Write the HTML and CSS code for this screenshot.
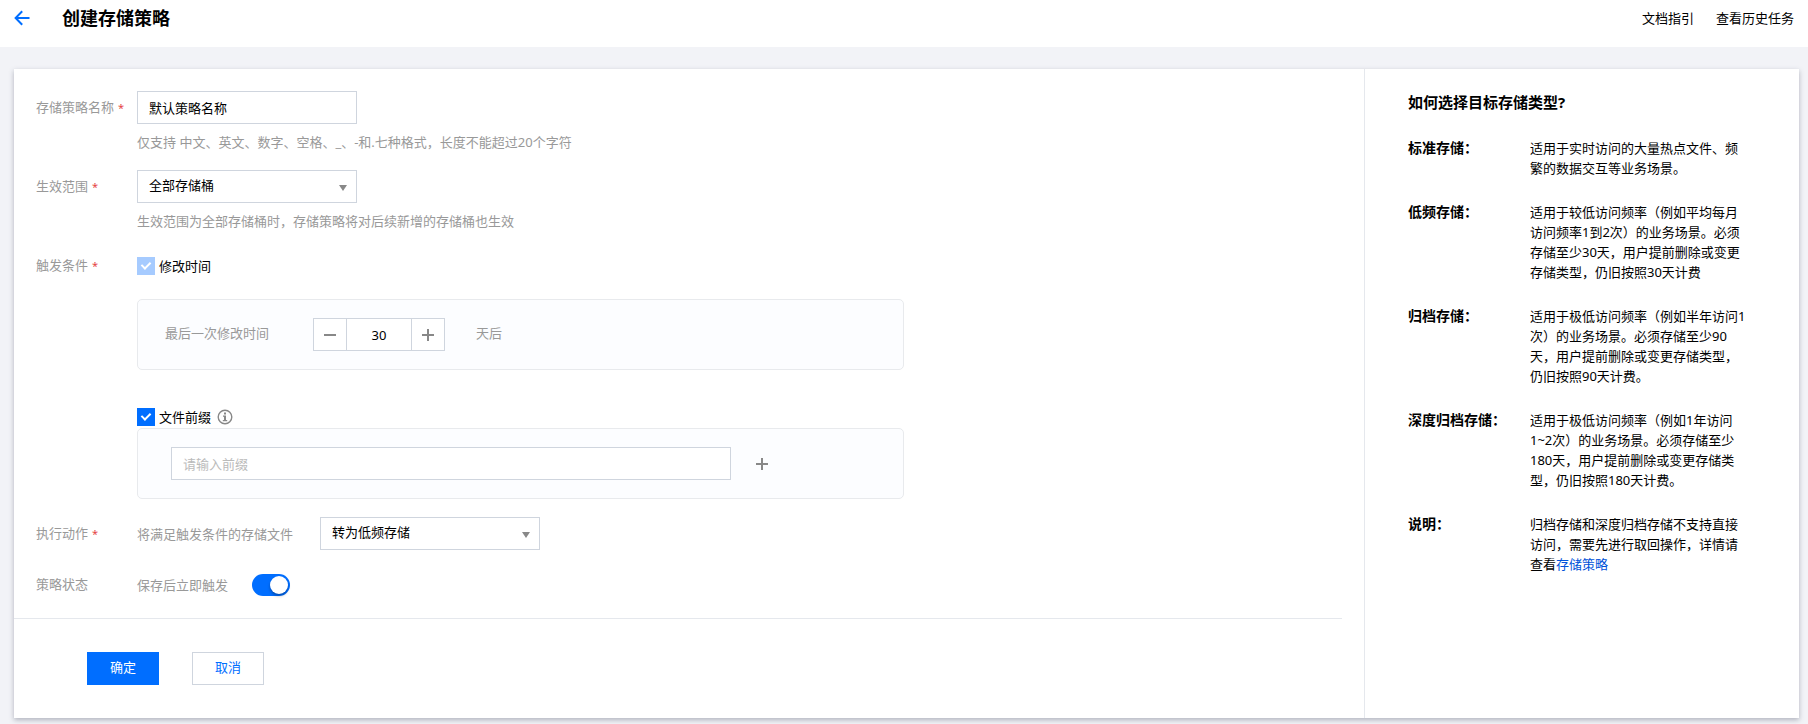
FILE: index.html
```html
<!DOCTYPE html>
<html lang="zh-CN">
<head>
  <meta charset="UTF-8" />
  <meta name="viewport" content="width=device-width, initial-scale=1.0"/>
  <title>创建存储策略</title>
  <link rel="stylesheet" href="styles.css">
</head>
<body>

<!-- 顶部标题栏 -->
<header class="topbar">
  <a href="#" class="back" aria-label="返回">
    <svg width="16" height="16" viewBox="0 0 16 16" fill="none" stroke="currentColor" stroke-width="2">
      <path d="M15.5 8H2M8.2 1.2L1.6 8l6.6 6.8"/>
    </svg>
  </a>
  <h1>创建存储策略</h1>
  <nav class="top-links">
    <a href="#">文档指引</a>
    <a href="#">查看历史任务</a>
  </nav>
</header>

<main class="card">
  <!-- 策略表单 -->
  <form class="policy-form">
    <div class="rows">
      <div class="row">
        <label class="row-label" for="name">存储策略名称<span class="required">*</span></label>
        <div class="field">
          <input type="text" class="text-input" id="name" value="默认策略名称">
          <p class="hint">仅支持 中文、英文、数字、空格、_、-和.七种格式，长度不能超过20个字符</p>
        </div>
      </div>

      <div class="row">
        <label class="row-label" for="scope">生效范围<span class="required">*</span></label>
        <div class="field">
          <div class="select-wrap">
            <select id="scope">
              <option>全部存储桶</option>
            </select>
          </div>
          <p class="hint">生效范围为全部存储桶时，存储策略将对后续新增的存储桶也生效</p>
        </div>
      </div>

      <div class="row">
        <span class="row-label">触发条件<span class="required">*</span></span>
        <div class="field conditions">
          <div class="condition condition-time">
            <label class="check"><input type="checkbox" checked disabled>修改时间</label>
            <div class="panel">
              <label for="days">最后一次修改时间</label>
              <div class="stepper">
                <button type="button" aria-label="减少">
                  <svg width="12" height="12" viewBox="0 0 12 12"><path d="M0 5h12v2H0z"/></svg>
                </button>
                <input type="text" id="days" value="30">
                <button type="button" aria-label="增加">
                  <svg width="12" height="12" viewBox="0 0 12 12"><path d="M0 5h5V0h2v5h5v2H7v5H5V7H0z"/></svg>
                </button>
              </div>
              <span>天后</span>
            </div>
          </div>

          <div class="condition">
            <div class="check-line">
              <label class="check"><input type="checkbox" checked>文件前缀</label>
              <svg class="info" width="16" height="16" viewBox="0 0 16 16">
                <circle cx="8" cy="8" r="6.8" fill="none" stroke="#888" stroke-width="1.4"/>
                <path d="M7 3.5h2v2H7zM6 6.5h3v4.6h1.2v1.2H5.8v-1.2H7V7.7H6z" fill="#888"/>
              </svg>
            </div>
            <div class="panel panel-prefix">
              <input type="text" class="text-input prefix-input" placeholder="请输入前缀" aria-label="文件前缀">
              <button type="button" class="add" aria-label="添加前缀">
                <svg width="12" height="12" viewBox="0 0 12 12"><path d="M0 5h5V0h2v5h5v2H7v5H5V7H0z"/></svg>
              </button>
            </div>
          </div>
        </div>
      </div>

      <div class="row">
        <span class="row-label">执行动作<span class="required">*</span></span>
        <div class="field inline">
          <label for="action">将满足触发条件的存储文件</label>
          <div class="select-wrap">
            <select id="action">
              <option>转为低频存储</option>
            </select>
          </div>
        </div>
      </div>

      <div class="row">
        <span class="row-label">策略状态</span>
        <div class="field inline">
          <label for="status">保存后立即触发</label>
          <input type="checkbox" class="switch" id="status" checked>
        </div>
      </div>
    </div>

    <div class="actions">
      <button type="submit" class="btn btn-primary">确定</button>
      <button type="button" class="btn">取消</button>
    </div>
  </form>

  <!-- 右侧说明 -->
  <aside class="guide">
    <h2>如何选择目标存储类型?</h2>
    <dl>
      <dt>标准存储：</dt>
      <dd>适用于实时访问的大量热点文件、频繁的数据交互等业务场景。</dd>
      <dt>低频存储：</dt>
      <dd>适用于较低访问频率（例如平均每月访问频率1到2次）的业务场景。必须存储至少30天，用户提前删除或变更存储类型，仍旧按照30天计费</dd>
      <dt>归档存储：</dt>
      <dd>适用于极低访问频率（例如半年访问1次）的业务场景。必须存储至少90天，用户提前删除或变更存储类型，仍旧按照90天计费。</dd>
      <dt>深度归档存储：</dt>
      <dd>适用于极低访问频率（例如1年访问1~2次）的业务场景。必须存储至少180天，用户提前删除或变更存储类型，仍旧按照180天计费。</dd>
      <dt>说明：</dt>
      <dd>归档存储和深度归档存储不支持直接访问，需要先进行取回操作，详情请查看<a href="#">存储策略</a></dd>
    </dl>
  </aside>
</main>

</body>
</html>
```

FILE: styles.css
```css
:root {
  --primary: #006eff;
  --border: #cfd5de;
  --line: #e5e8ed;
  --muted: #999;
  --icon: #888;
}

* {
  margin: 0;
  padding: 0;
  box-sizing: border-box;
}

body {
  min-height: 100vh;
  font-family: "Noto Sans", "Noto Sans CJK SC", sans-serif;
  font-size: 13px;
  line-height: 20px;
  color: #000;
  background-color: #f2f3f7;
}

input,
select,
button {
  font: inherit;
  color: inherit;
}

a {
  color: inherit;
  text-decoration: none;
}

/* 顶部标题栏 */
.topbar {
  display: flex;
  align-items: center;
  padding: 0 14px 11px;
  background-color: #fff;
}

.back {
  display: flex;
  margin-right: 32px;
  color: var(--primary);
}

.topbar h1 {
  font-size: 18px;
  line-height: 36px;
}

.top-links {
  display: flex;
  gap: 22px;
  margin-left: auto;
}

/* 主卡片 */
.card {
  display: flex;
  margin: 22px 9px 5px 14px;
  background-color: #fff;
  box-shadow: 0 2px 5px rgba(54, 58, 80, 0.35);
}

.policy-form {
  flex: 1;
  min-width: 0;
}

.rows {
  display: flex;
  flex-direction: column;
  gap: 18px;
  margin-right: 22px;
  padding: 22px 0 17px 22px;
  border-bottom: 1px solid var(--line);
}

.row {
  display: flex;
  min-height: 33px;
  color: var(--muted);
}

.row-label {
  flex: none;
  width: 101px;
  line-height: 32px;
}

.required {
  margin-left: 4px;
  font-size: 11px;
  color: #e54545;
}

.field {
  flex: 1;
  min-width: 0;
}

.inline {
  display: flex;
  align-items: center;
  gap: 24px;
}

.inline .select-wrap {
  margin-left: 3px;
}

.hint {
  margin-top: 8px;
}

.text-input {
  display: block;
  width: 220px;
  height: 33px;
  padding: 0 11px;
  border: 1px solid var(--border);
  background-color: #fff;
  color: #000;
}

.text-input::placeholder {
  color: #bbb;
}

.select-wrap {
  position: relative;
  width: 220px;
}

.select-wrap::after {
  content: '';
  position: absolute;
  top: 15px;
  right: 10px;
  border: 4px solid transparent;
  border-top: 6px solid var(--icon);
  border-bottom: 0;
  pointer-events: none;
}

select {
  display: block;
  width: 100%;
  height: 33px;
  padding: 0 24px 3px 11px;
  appearance: none;
  border: 1px solid var(--border);
  border-radius: 0;
  background-color: #fff;
  color: #000;
}

/* 触发条件 */
.conditions {
  display: flex;
  flex-direction: column;
  gap: 36px;
  padding-top: 6px;
}

.condition-time .check {
  margin-bottom: 22px;
}

.check-line {
  display: flex;
  align-items: center;
  gap: 6px;
}

.check {
  display: flex;
  align-items: center;
  gap: 4px;
  height: 22px;
  color: #000;
}

.check input {
  position: relative;
  width: 18px;
  height: 18px;
  appearance: none;
  background-color: var(--primary);
}

.check input:disabled {
  background-color: #a6cbff;
}

.check input:checked::after {
  content: '';
  position: absolute;
  top: 3px;
  left: 6px;
  width: 4px;
  height: 7px;
  border: solid #fff;
  border-width: 0 2px 2px 0;
  transform: rotate(45deg);
}

.panel {
  display: flex;
  align-items: center;
  max-width: 767px;
  padding: 18px 27px;
  border: 1px solid #e8eaed;
  border-radius: 5px;
  background-color: #fcfdff;
}

.panel > label,
.panel > span {
  padding-bottom: 3px;
}

.stepper {
  display: flex;
  width: 132px;
  height: 33px;
  margin: 0 31px 0 44px;
  border: 1px solid var(--border);
  background-color: #fff;
}

.stepper button {
  display: flex;
  align-items: center;
  justify-content: center;
  width: 32px;
  border: 0;
  background: none;
}

.stepper input {
  flex: 1;
  min-width: 0;
  border: solid var(--border);
  border-width: 0 1px;
  color: #000;
  text-align: center;
}

.stepper svg,
.add svg {
  display: block;
  fill: var(--icon);
}

.panel-prefix {
  gap: 25px;
  padding: 18px 33px;
}

.prefix-input {
  width: 560px;
}

.add {
  border: 0;
  background: none;
}

/* 开关 */
.switch {
  position: relative;
  width: 38px;
  height: 22px;
  appearance: none;
  border-radius: 11px;
  background-color: #bbb;
}

.switch:checked {
  background-color: var(--primary);
}

.switch::after {
  content: '';
  position: absolute;
  top: 2px;
  left: 2px;
  width: 18px;
  height: 18px;
  border-radius: 50%;
  background-color: #fff;
  box-shadow: 0 2px 3px rgba(0, 0, 0, 0.3);
}

.switch:checked::after {
  left: 18px;
}

/* 底部按钮 */
.actions {
  display: flex;
  gap: 33px;
  padding: 33px 73px;
}

.btn {
  width: 72px;
  height: 33px;
  padding-bottom: 3px;
  border: 1px solid var(--border);
  background-color: #fff;
  color: var(--primary);
}

.btn-primary {
  border-color: var(--primary);
  background-color: var(--primary);
  color: #fff;
}

/* 右侧说明 */
.guide {
  flex: none;
  width: 435px;
  padding: 22px 43px;
  border-left: 1px solid var(--line);
}

.guide h2 {
  margin-bottom: 25px;
  font-size: 15px;
  line-height: 22px;
}

.guide dl {
  display: grid;
  grid-template-columns: 122px 218px;
  row-gap: 24px;
}

.guide dt {
  font-size: 14px;
  font-weight: bold;
}

.guide dd a {
  color: #0052d9;
}

@media (max-width: 1100px) {
  .card {
    flex-direction: column;
  }

  .guide {
    width: auto;
    border-left: 0;
    border-top: 1px solid var(--line);
  }
}
```
